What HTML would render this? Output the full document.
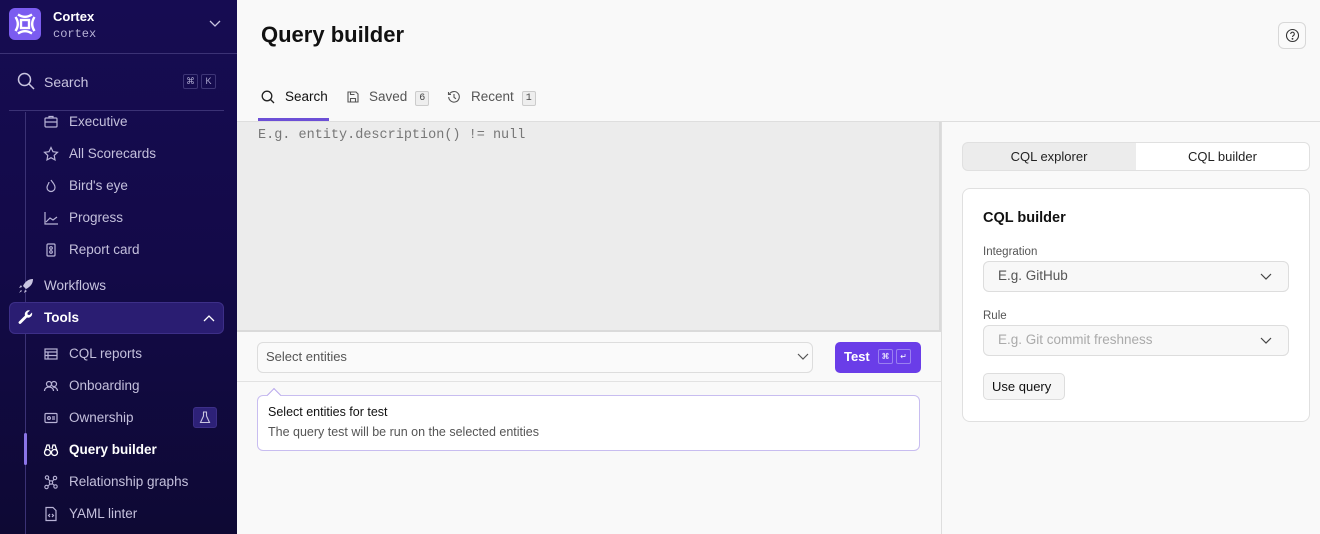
<!DOCTYPE html>
<html><head><meta charset="utf-8"><style>
*{box-sizing:border-box;margin:0;padding:0}
body{width:1320px;height:534px;overflow:hidden;font-family:"Liberation Sans",sans-serif;background:#f9f9f9;position:relative;color:#111}
.sb{position:absolute;left:0;top:0;width:237px;height:534px;background:linear-gradient(180deg,#160c52 0%,#130a48 50%,#0e0934 100%);color:#c9c5e0}
.logo{position:absolute;left:9px;top:8px;width:32px;height:32px;border-radius:6px;background:#7b5cf0}
.ws{position:absolute;left:53px;top:9px;color:#fff;font-weight:bold;font-size:13px}
.ws2{position:absolute;left:53px;top:27px;font-family:"Liberation Mono",monospace;font-size:12px;color:#b8b3d6}
.hr{position:absolute;height:1px;background:#3b3275}
.it{position:absolute;left:69px;font-size:13.5px;color:#c4c0dc}
.ic{position:absolute;left:43px;width:16px;height:16px}
.top{position:absolute;left:44px;font-size:13.5px;color:#c9c5e0}
.kbd{position:absolute;top:74px;width:15px;height:15px;border:1px solid #3d3576;border-radius:2px;font-size:9px;color:#aaa6cc;text-align:center;line-height:13px}
.main{position:absolute;left:237px;top:0;right:0;bottom:0}
h1{position:absolute;left:24px;top:22px;font-size:22px;font-weight:bold;color:#111}
.tab{position:absolute;top:89px;font-size:13.5px;color:#555}
.badge{display:inline-block;vertical-align:1px;border:1px solid #ccc;background:#eee;border-radius:2px;font-size:10px;line-height:13px;padding:0 3px;margin-left:8px;color:#444;font-family:"Liberation Mono",monospace}
.mono{font-family:"Liberation Mono",monospace}
</style></head><body>
<div class="sb">
 <div class="logo"><svg width="32" height="32" viewBox="0 0 32 32" fill="none" stroke="#fff" stroke-width="2.4"><rect x="12" y="12" width="8" height="8"/><path d="M9 6.5c4.5 3 9.5 3 14 0M9 25.5c4.5-3 9.5-3 14 0M6.5 9c3 4.5 3 9.5 0 14M25.5 9c-3 4.5-3 9.5 0 14"/></svg></div>
 <div class="ws">Cortex</div><div class="ws2">cortex</div>
 <svg style="position:absolute;left:209px;top:20px" width="12" height="8" viewBox="0 0 12 8" fill="none" stroke="#c9c5e0" stroke-width="1.3"><path d="M1 1l5 5 5-5"/></svg>
 <div class="hr" style="left:0;top:53px;width:237px"></div>
 <svg style="position:absolute;left:17px;top:72px" width="18" height="18" viewBox="0 0 18 18" fill="none" stroke="#c9c5e0" stroke-width="1.5"><circle cx="7.5" cy="7.5" r="6"/><path d="M12 12l5 5"/></svg>
 <div class="top" style="top:74px;font-size:14px">Search</div>
 <div class="kbd" style="left:183px">⌘</div><div class="kbd" style="left:201px">K</div>
 <div class="hr" style="left:9px;top:110px;width:215px"></div>
 <div style="position:absolute;left:25px;top:112px;width:1px;height:422px;background:#3b3275"></div>
 <div style="position:absolute;left:24px;top:433px;width:3px;height:32px;background:#8b74e8;border-radius:2px"></div>
 <svg class="ic" style="top:114px" viewBox="0 0 16 16" fill="none" stroke="#b8b3d6" stroke-width="1.2"><rect x="2" y="4" width="12" height="9" rx="1"/><path d="M6 4V2.5h4V4M2 8h12"/></svg>
 <div class="it" style="top:114px">Executive</div>
 <svg class="ic" style="top:146px" viewBox="0 0 16 16" fill="none" stroke="#b8b3d6" stroke-width="1.2"><path d="M8 1.5l2 4.2 4.5.6-3.3 3.1.8 4.5L8 11.7 4 13.9l.8-4.5L1.5 6.3 6 5.7z"/></svg>
 <div class="it" style="top:146px">All Scorecards</div>
 <svg class="ic" style="top:178px" viewBox="0 0 16 16" fill="none" stroke="#b8b3d6" stroke-width="1.2"><path d="M8 2c1 2 4 4 4 7.5a4 4 0 01-8 0C4 7 6 6 6 4"/></svg>
 <div class="it" style="top:178px">Bird's eye</div>
 <svg class="ic" style="top:210px" viewBox="0 0 16 16" fill="none" stroke="#b8b3d6" stroke-width="1.2"><path d="M2 2v12h13M3 12l4-4 3 2 4-3"/></svg>
 <div class="it" style="top:210px">Progress</div>
 <svg class="ic" style="top:242px" viewBox="0 0 16 16" fill="none" stroke="#b8b3d6" stroke-width="1.2"><rect x="4" y="2" width="8" height="12" rx="1"/><circle cx="8" cy="6" r="1.3"/><circle cx="8" cy="10" r="1.3"/></svg>
 <div class="it" style="top:242px">Report card</div>
 <svg style="position:absolute;left:17px;top:277px" width="18" height="18" viewBox="0 0 18 18" fill="#c9c5e0"><path d="M16 2c-5 0-8 3-10 7l3 3c4-2 7-5 7-10zM5 10l-3 1 2-3zM8 13l-1 3 3-2zM4 13l-2 3 3-2z"/></svg>
 <div class="top" style="top:278px">Workflows</div>
 <div style="position:absolute;left:9px;top:302px;width:215px;height:32px;border-radius:6px;background:#2a1d72;border:1px solid #3d2f88"></div>
 <svg style="position:absolute;left:17px;top:309px" width="18" height="18" viewBox="0 0 18 18" fill="#fff"><path d="M15 3.5l-2.5 2.5-1.8-.3-.3-1.8L13 1.5a4 4 0 00-5 5L2 12.5a1.4 1.4 0 002 2l6-6a4 4 0 005-5z"/></svg>
 <div class="top" style="top:310px;color:#fff;font-weight:bold">Tools</div>
 <svg style="position:absolute;left:203px;top:314px" width="12" height="8" viewBox="0 0 12 8" fill="none" stroke="#fff" stroke-width="1.3"><path d="M1 7l5-5 5 5"/></svg>
 <svg class="ic" style="top:346px" viewBox="0 0 16 16" fill="none" stroke="#b8b3d6" stroke-width="1.2"><rect x="2" y="3" width="12" height="10"/><path d="M2 6h12M2 9.5h12M5 6v7"/></svg>
 <div class="it" style="top:346px">CQL reports</div>
 <svg class="ic" style="top:378px" viewBox="0 0 16 16" fill="none" stroke="#b8b3d6" stroke-width="1.2"><circle cx="6" cy="6" r="2.5"/><circle cx="11" cy="6" r="2.5"/><path d="M1.5 13c0-2.5 2-4 4.5-4s4.5 1.5 4.5 4M10 9c2.5 0 4.5 1.5 4.5 4"/></svg>
 <div class="it" style="top:378px">Onboarding</div>
 <svg class="ic" style="top:410px" viewBox="0 0 16 16" fill="none" stroke="#b8b3d6" stroke-width="1.2"><rect x="2" y="3.5" width="12" height="9" rx="1"/><circle cx="6" cy="8" r="1.4"/><path d="M9 7h3M9 9h3"/></svg>
 <div class="it" style="top:410px">Ownership</div>
 <div style="position:absolute;left:193px;top:407px;width:24px;height:21px;border-radius:3px;background:#2d2178;border:1px solid #3d2f88"></div>
 <svg style="position:absolute;left:199px;top:411px" width="12" height="13" viewBox="0 0 12 13" fill="none" stroke="#c9c5e0" stroke-width="1.1"><path d="M4 1h4M4.5 1v4L1.5 11.5h9L7.5 5V1"/></svg>
 <svg class="ic" style="top:442px" viewBox="0 0 16 16" fill="none" stroke="#fff" stroke-width="1.3"><circle cx="4.5" cy="10.5" r="3"/><circle cx="11.5" cy="10.5" r="3"/><path d="M2 9l2-6h2l1 4M14 9l-2-6h-2l-1 4"/></svg>
 <div class="it" style="top:442px;color:#fff;font-weight:bold">Query builder</div>
 <svg class="ic" style="top:474px" viewBox="0 0 16 16" fill="none" stroke="#b8b3d6" stroke-width="1.1"><circle cx="4" cy="3.5" r="1.7"/><circle cx="12" cy="4" r="1.7"/><circle cx="8" cy="8.5" r="1.7"/><circle cx="3.5" cy="13" r="1.7"/><circle cx="12.5" cy="12.5" r="1.7"/><path d="M5 5l2 2M11 5.5l-2 2M7 10l-2 2M9.3 9.8l2 1.5"/></svg>
 <div class="it" style="top:474px">Relationship graphs</div>
 <svg class="ic" style="top:506px" viewBox="0 0 16 16" fill="none" stroke="#b8b3d6" stroke-width="1.2"><path d="M3 1.5h7l3 3v10H3z"/><path d="M7 8l-1.5 1.5L7 11M9 8l1.5 1.5L9 11"/></svg>
 <div class="it" style="top:506px">YAML linter</div>
</div>

<div class="main">
 <h1>Query builder</h1>
 <div style="position:absolute;left:1041px;top:22px;width:28px;height:27px;border:1px solid #d8d8d8;border-radius:6px;background:#fafafa"></div>
 <svg style="position:absolute;left:1048px;top:28px" width="15" height="15" viewBox="0 0 15 15" fill="none" stroke="#333" stroke-width="1.1"><circle cx="7.5" cy="7.5" r="6"/><path d="M5.7 6a1.8 1.8 0 113 1.3c-.8.5-1.2.8-1.2 1.7"/><circle cx="7.5" cy="10.8" r=".4" fill="#333"/></svg>
 <svg style="position:absolute;left:24px;top:90px" width="14" height="14" viewBox="0 0 14 14" fill="none" stroke="#222" stroke-width="1.3"><circle cx="6" cy="6" r="4.8"/><path d="M9.5 9.5l3.5 3.5"/></svg>
 <div class="tab" style="left:48px;color:#111">Search</div>
 <div style="position:absolute;left:21px;top:118px;width:71px;height:3px;background:#6c4fd6"></div>
 <svg style="position:absolute;left:109px;top:90px" width="14" height="14" viewBox="0 0 14 14" fill="none" stroke="#555" stroke-width="1.1"><path d="M2 2h8l2 2v8H2z"/><path d="M4.5 12V8.5h5V12M4.5 2v2.5h4"/></svg>
 <div class="tab" style="left:132px">Saved<span class="badge">6</span></div>
 <svg style="position:absolute;left:210px;top:90px" width="14" height="14" viewBox="0 0 14 14" fill="none" stroke="#555" stroke-width="1.1"><path d="M2.5 4A5.3 5.3 0 111.7 7M1.5 2v2.5H4M7 4v3.3l2 1.5"/></svg>
 <div class="tab" style="left:234px">Recent<span class="badge">1</span></div>
 <div style="position:absolute;left:0;top:121px;width:1083px;height:1px;background:#dedede"></div>
 <div style="position:absolute;left:0;top:122px;width:704px;height:210px;background:#ececec;border-right:2px solid #dadada;border-bottom:2px solid #dadada"></div>
 <div class="mono" style="position:absolute;left:21px;top:128px;font-size:13.5px;color:#777">E.g. entity.description() != null</div>
 <div style="position:absolute;left:704px;top:122px;width:1px;height:412px;background:#dedede"></div>
 <div style="position:absolute;left:20px;top:342px;width:556px;height:31px;border:1px solid #ddd;border-radius:6px;background:#fafafa"></div>
 <div style="position:absolute;left:29px;top:349px;font-size:13px;color:#555">Select entities</div>
 <svg style="position:absolute;left:560px;top:353px" width="12" height="8" viewBox="0 0 12 8" fill="none" stroke="#555" stroke-width="1.2"><path d="M1 1l5 5 5-5"/></svg>
 <div style="position:absolute;left:598px;top:342px;width:86px;height:31px;border-radius:5px;background:#6a3de8"></div>
 <div style="position:absolute;left:607px;top:349px;font-size:13px;color:#fff;font-weight:bold">Test</div>
 <div style="position:absolute;left:641px;top:349px;width:15px;height:15px;border:1px solid #9a80f0;border-radius:2px;color:#fff;font-size:8px;text-align:center;line-height:13px">⌘</div>
 <div style="position:absolute;left:659px;top:349px;width:15px;height:15px;border:1px solid #9a80f0;border-radius:2px;color:#fff;font-size:8px;text-align:center;line-height:13px">↵</div>
 <div style="position:absolute;left:0;top:381px;width:704px;height:1px;background:#e2e2e2"></div>
 <div style="position:absolute;left:20px;top:395px;width:663px;height:56px;border:1px solid #c8bdf0;border-radius:6px;background:#fff"></div>
 <div style="position:absolute;left:32px;top:390px;width:10px;height:10px;background:#fff;border-left:1px solid #b8a8ec;border-top:1px solid #b8a8ec;transform:rotate(45deg)"></div>
 <div style="position:absolute;left:31px;top:405px;font-size:12.5px;color:#111">Select entities for test</div>
 <div style="position:absolute;left:31px;top:425px;font-size:12.5px;color:#555">The query test will be run on the selected entities</div>

 <div style="position:absolute;left:725px;top:142px;width:348px;height:29px;border:1px solid #e0e0e0;border-radius:6px;background:#ececec"></div>
 <div style="position:absolute;left:899px;top:143px;width:173px;height:27px;border-radius:0 5px 5px 0;background:#fff"></div>
 <div style="position:absolute;left:725px;top:149px;width:174px;text-align:center;font-size:13px;color:#222">CQL explorer</div>
 <div style="position:absolute;left:899px;top:149px;width:173px;text-align:center;font-size:13px;color:#222">CQL builder</div>
 <div style="position:absolute;left:725px;top:188px;width:348px;height:234px;border:1px solid #e0e0e0;border-radius:8px;background:#fff"></div>
 <div style="position:absolute;left:746px;top:210px;font-size:14.5px;font-weight:bold;color:#111">CQL builder</div>
 <div style="position:absolute;left:746px;top:246px;font-size:11.5px;color:#555">Integration</div>
 <div style="position:absolute;left:746px;top:261px;width:306px;height:31px;border:1px solid #ddd;border-radius:6px;background:#f8f8f8"></div>
 <div style="position:absolute;left:761px;top:268px;font-size:13.5px;color:#555">E.g. GitHub</div>
 <svg style="position:absolute;left:1023px;top:273px" width="12" height="8" viewBox="0 0 12 8" fill="none" stroke="#444" stroke-width="1.2"><path d="M1 1l5 5 5-5"/></svg>
 <div style="position:absolute;left:746px;top:310px;font-size:11.5px;color:#555">Rule</div>
 <div style="position:absolute;left:746px;top:325px;width:306px;height:31px;border:1px solid #ddd;border-radius:6px;background:#f8f8f8"></div>
 <div style="position:absolute;left:761px;top:332px;font-size:13.5px;color:#aaa">E.g. Git commit freshness</div>
 <svg style="position:absolute;left:1023px;top:337px" width="12" height="8" viewBox="0 0 12 8" fill="none" stroke="#444" stroke-width="1.2"><path d="M1 1l5 5 5-5"/></svg>
 <div style="position:absolute;left:746px;top:373px;width:82px;height:27px;border:1px solid #ddd;border-radius:5px;background:#f6f6f6"></div>
 <div style="position:absolute;left:755px;top:379px;font-size:13px;color:#111">Use query</div>
</div>
</body></html>
